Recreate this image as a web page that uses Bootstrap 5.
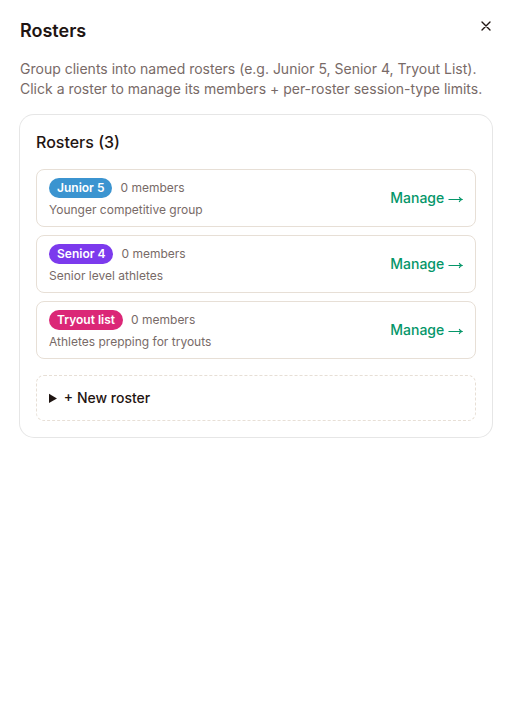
<!DOCTYPE html>
<html lang="en">
<head>
<meta charset="utf-8">
<meta name="viewport" content="width=device-width, initial-scale=1">
<title>Rosters</title>
<link href="https://cdn.jsdelivr.net/npm/bootstrap@5.3.0/dist/css/bootstrap.min.css" rel="stylesheet">
<style>
  body { font-family: Inter, "Liberation Sans", sans-serif; font-size: 14px; line-height: 20px; color: #1f1512; background: #fff; }
  .panel { padding: 20px; }
  .panel-title { font-size: 18px; line-height: 22px; font-weight: 600; color: #1f1512; }
  .panel-close { width: 16px; height: 16px; margin: -2px -2px 0 0; color: #1f1512; line-height: 0; }
  .muted { color: #786a67; }
  .intro { margin: 17px 0 16px; }
  .roster-card { padding: 16px; border-radius: 14px; box-shadow: 0 0 0 1px #e6e6e6; }
  .card-heading { font-size: 16px; line-height: 22px; font-weight: 500; margin-bottom: 16px; color: #1f1512; }
  .roster { border: 1px solid #e7dfd6; border-radius: 8px; padding: 8px 12px; }
  .tag { font-size: 12px; line-height: 16px; font-weight: 600; padding: 2px 8px; color: #fff; }
  .tag-blue { background: #3b94d0; }
  .tag-violet { background: #7c3aed; }
  .tag-pink { background: #db2777; }
  .note { font-size: 12px; line-height: 16px; }
  .manage { color: #059669; font-weight: 500; }
  .arrow { width: 15px; height: 8px; vertical-align: baseline; fill: none; stroke: currentColor; stroke-width: 1.1; }
  .new-roster { border: 1px dashed #e7dfd6; border-radius: 8px; padding: 12px; margin-top: 16px; }
  .new-roster summary { font-weight: 500; }
</style>
<script src="https://cdn.jsdelivr.net/npm/bootstrap@5.3.0/dist/js/bootstrap.bundle.min.js"></script>
</head>
<body>
<main class="panel">
  <header class="d-flex justify-content-between align-items-start">
    <h1 class="panel-title mb-0">Rosters</h1>
    <button type="button" class="panel-close btn p-0 border-0" aria-label="Close">
      <svg width="16" height="16" viewBox="0 0 16 16" fill="none" stroke="currentColor" stroke-width="1.35" stroke-linecap="round"><path d="M4 4l8 8M12 4l-8 8"/></svg>
    </button>
  </header>
  <p class="intro muted">Group clients into named rosters (e.g. Junior 5, Senior 4, Tryout List). Click a roster to manage its members + per-roster session-type limits.</p>
  <section class="roster-card">
    <h2 class="card-heading">Rosters (3)</h2>
    <ul class="list-unstyled d-flex flex-column gap-2 mb-0">
      <li class="roster d-flex justify-content-between align-items-center">
        <div>
          <div class="d-flex align-items-center gap-2"><span class="tag tag-blue rounded-pill">Junior 5</span><span class="note muted">0 members</span></div>
          <div class="note muted mt-1">Younger competitive group</div>
        </div>
        <a href="#junior-5" class="manage text-decoration-none">Manage <svg class="arrow" viewBox="0 0 15 8" aria-hidden="true"><path d="M.5 4.5h13.5M11.2 2c.4 1.200 1.300 2.100 2.800 2.500c-1.500.4-2.400 1.300-2.800 2.500"/></svg></a>
      </li>
      <li class="roster d-flex justify-content-between align-items-center">
        <div>
          <div class="d-flex align-items-center gap-2"><span class="tag tag-violet rounded-pill">Senior 4</span><span class="note muted">0 members</span></div>
          <div class="note muted mt-1">Senior level athletes</div>
        </div>
        <a href="#senior-4" class="manage text-decoration-none">Manage <svg class="arrow" viewBox="0 0 15 8" aria-hidden="true"><path d="M.5 4.5h13.5M11.2 2c.4 1.200 1.300 2.100 2.800 2.500c-1.500.4-2.400 1.300-2.800 2.500"/></svg></a>
      </li>
      <li class="roster d-flex justify-content-between align-items-center">
        <div>
          <div class="d-flex align-items-center gap-2"><span class="tag tag-pink rounded-pill">Tryout list</span><span class="note muted">0 members</span></div>
          <div class="note muted mt-1">Athletes prepping for tryouts</div>
        </div>
        <a href="#tryout-list" class="manage text-decoration-none">Manage <svg class="arrow" viewBox="0 0 15 8" aria-hidden="true"><path d="M.5 4.5h13.5M11.2 2c.4 1.200 1.300 2.100 2.800 2.500c-1.500.4-2.400 1.300-2.800 2.500"/></svg></a>
      </li>
    </ul>
    <details class="new-roster">
      <summary>+ New roster</summary>
    </details>
  </section>
</main>
</body>
</html>
